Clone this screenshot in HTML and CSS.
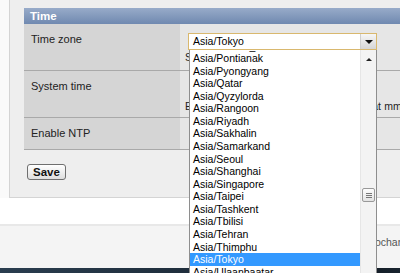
FILE: index.html
```html
<!DOCTYPE html>
<html lang="en">
<head>
<meta charset="UTF-8">
<title>Time settings</title>
<link rel="stylesheet" href="styles.css">
</head>
<body>

<div class="page">
    <div class="panel">
        <div class="section-title">Time</div>
        <table class="settings">
            <tr class="row-tz">
                <th>Time zone</th>
                <td>
                    <div class="tz-field">
                        <div class="select"><span>Asia/Tokyo</span><span class="arrow"></span></div>
                        <div class="tz-list">
                            <ul class="tz-options">
                                <li class="first">Asia/Phnom_Penh</li>
                                <li>Asia/Pontianak</li>
                                <li>Asia/Pyongyang</li>
                                <li>Asia/Qatar</li>
                                <li>Asia/Qyzylorda</li>
                                <li>Asia/Rangoon</li>
                                <li>Asia/Riyadh</li>
                                <li>Asia/Sakhalin</li>
                                <li>Asia/Samarkand</li>
                                <li>Asia/Seoul</li>
                                <li>Asia/Shanghai</li>
                                <li>Asia/Singapore</li>
                                <li>Asia/Taipei</li>
                                <li>Asia/Tashkent</li>
                                <li>Asia/Tbilisi</li>
                                <li>Asia/Tehran</li>
                                <li>Asia/Thimphu</li>
                                <li class="selected">Asia/Tokyo</li>
                                <li>Asia/Ulaanbaatar</li>
                                <li>Asia/Urumqi</li>
                            </ul>
                            <div class="tz-scroll">
                                <span class="up"></span>
                                <span class="thumb"><i></i><i></i><i></i></span>
                            </div>
                        </div>
                    </div>
                    <div class="hint">Select the time zone of your location</div>
                </td>
            </tr>
            <tr class="row-time">
                <th>System time</th>
                <td>
                    <input class="time-input" type="text" value="2009-06-15 10:42">
                    <div class="hint">Enter the system time in a 24-hour format mm/dd/yyyy</div>
                </td>
            </tr>
            <tr class="row-ntp">
                <th>Enable NTP</th>
                <td><input type="checkbox"></td>
            </tr>
        </table>
        <button class="save">Save</button>
    </div>

    <div class="gap"></div>

    <div class="footer">© 2009 Kochanski Networks</div>

    <div class="taskbar"></div>
</div>

</body>
</html>
```

FILE: styles.css
```css
body {
    margin: 0;
    background: #fafafa;
    font-family: "Liberation Sans", Arial, sans-serif;
    overflow: hidden;
}

.page {
    width: 520px;
}

.panel {
    margin-left: 9px;
    border-left: 1px solid #d4d4d4;
    border-bottom: 1px solid #d4d4d4;
    background: #eeeeee;
    padding: 8px 0 17px 14px;
}

.section-title {
    height: 16px;
    line-height: 16px;
    padding-left: 6px;
    background: linear-gradient(#98abc9, #7089b0);
    color: #fff;
    font-weight: bold;
    font-size: 11.5px;
}

.settings {
    width: 100%;
    border-collapse: collapse;
    font-size: 11px;
    color: #222;
}

.settings th,
.settings td {
    vertical-align: top;
    border-bottom: 1px solid #a9a9a9;
    padding: 9px 5px 0;
}

.settings th {
    width: 144px;
    padding-left: 7px;
    text-align: left;
    font-weight: normal;
    background: #d5d5d5;
}

.settings td {
    background: #e6e6e6;
}

.row-tz { height: 46px; }
.row-time { height: 47px; }
.row-ntp { height: 32px; }

.hint {
    white-space: nowrap;
    font-size: 10.5px;
    line-height: 13px;
    margin-top: 1px;
}

.row-time .hint {
    margin-top: 3px;
    word-spacing: 0.4px;
}

.time-input {
    font: 10.5px "Liberation Sans", Arial, sans-serif;
    width: 140px;
    height: 15px;
    margin: 0 0 0 8px;
    padding: 0 3px;
    border: 1px solid #a5acb2;
}

.row-ntp input {
    margin: 0 0 0 10px;
}

/* open time zone select */
.tz-field {
    position: relative;
    margin-left: 3px;
    width: 189px;
}

.select {
    display: flex;
    justify-content: space-between;
    height: 15px;
    border: 1px solid #d9b86e;
    background: #fff;
    font-size: 10.5px;
    line-height: 15px;
    color: #000;
}

.select span:first-child {
    padding-left: 4px;
}

.arrow {
    width: 15px;
    height: 15px;
    background: linear-gradient(#f6f6f6, #d6d6d6);
    border-left: 1px solid #cfcfcf;
    display: flex;
    align-items: center;
    justify-content: center;
}

.arrow::after {
    content: "";
    border-left: 4px solid transparent;
    border-right: 4px solid transparent;
    border-top: 4px solid #111;
}

.tz-list {
    position: absolute;
    top: 17px;
    left: 1px;
    width: 186px;
    height: 240px;
    border: 1px solid #8e8e8e;
    border-top: 0;
    background: #fff;
    display: flex;
    overflow: hidden;
    z-index: 2;
}

.tz-options {
    flex: 1;
    list-style: none;
    margin: 0;
    padding: 0;
    font-size: 10.5px;
    line-height: 12.56px;
    color: #000;
}

.tz-options li {
    padding-left: 3px;
    white-space: nowrap;
}

.tz-options .first {
    margin-top: -10.5px;
}

.tz-options .selected {
    background: #3399ff;
    color: #fff;
}

.tz-scroll {
    width: 15px;
    background: #f3f3f3;
    border-left: 1px solid #e6e6e6;
    display: flex;
    flex-direction: column;
    align-items: center;
}

.up {
    margin-top: 8px;
    border-left: 3px solid transparent;
    border-right: 3px solid transparent;
    border-bottom: 3px solid #222;
}

.thumb {
    margin-top: 127px;
    width: 11px;
    height: 12px;
    border: 1px solid #999;
    border-radius: 2px;
    background: linear-gradient(#fdfdfd, #e3e3e3);
    display: flex;
    flex-direction: column;
    align-items: center;
    justify-content: center;
    gap: 1px;
}

.thumb i {
    width: 6px;
    height: 1px;
    background: #777;
}

.save {
    margin: 14px 0 0 3px;
    height: 16px;
    padding: 0 5px;
    border: 1px solid #6f6f6f;
    border-radius: 3px;
    background: linear-gradient(#ffffff, #dedede);
    font: bold 11.5px "Liberation Sans", Arial, sans-serif;
    color: #111;
    line-height: 14px;
}

.gap {
    height: 26px;
    background: #fff;
    border-bottom: 2px solid #e8e8e8;
}

.footer {
    height: 32px;
    padding: 10px 0 0 331px;
    background: #f4f4f4;
    font-size: 10.5px;
    color: #555;
    white-space: nowrap;
}

.taskbar {
    height: 10px;
    background: linear-gradient(90deg, #2a3d4f 0%, #1c2a37 45%, #0b1015 60%, #2a3e52 100%);
}
```
